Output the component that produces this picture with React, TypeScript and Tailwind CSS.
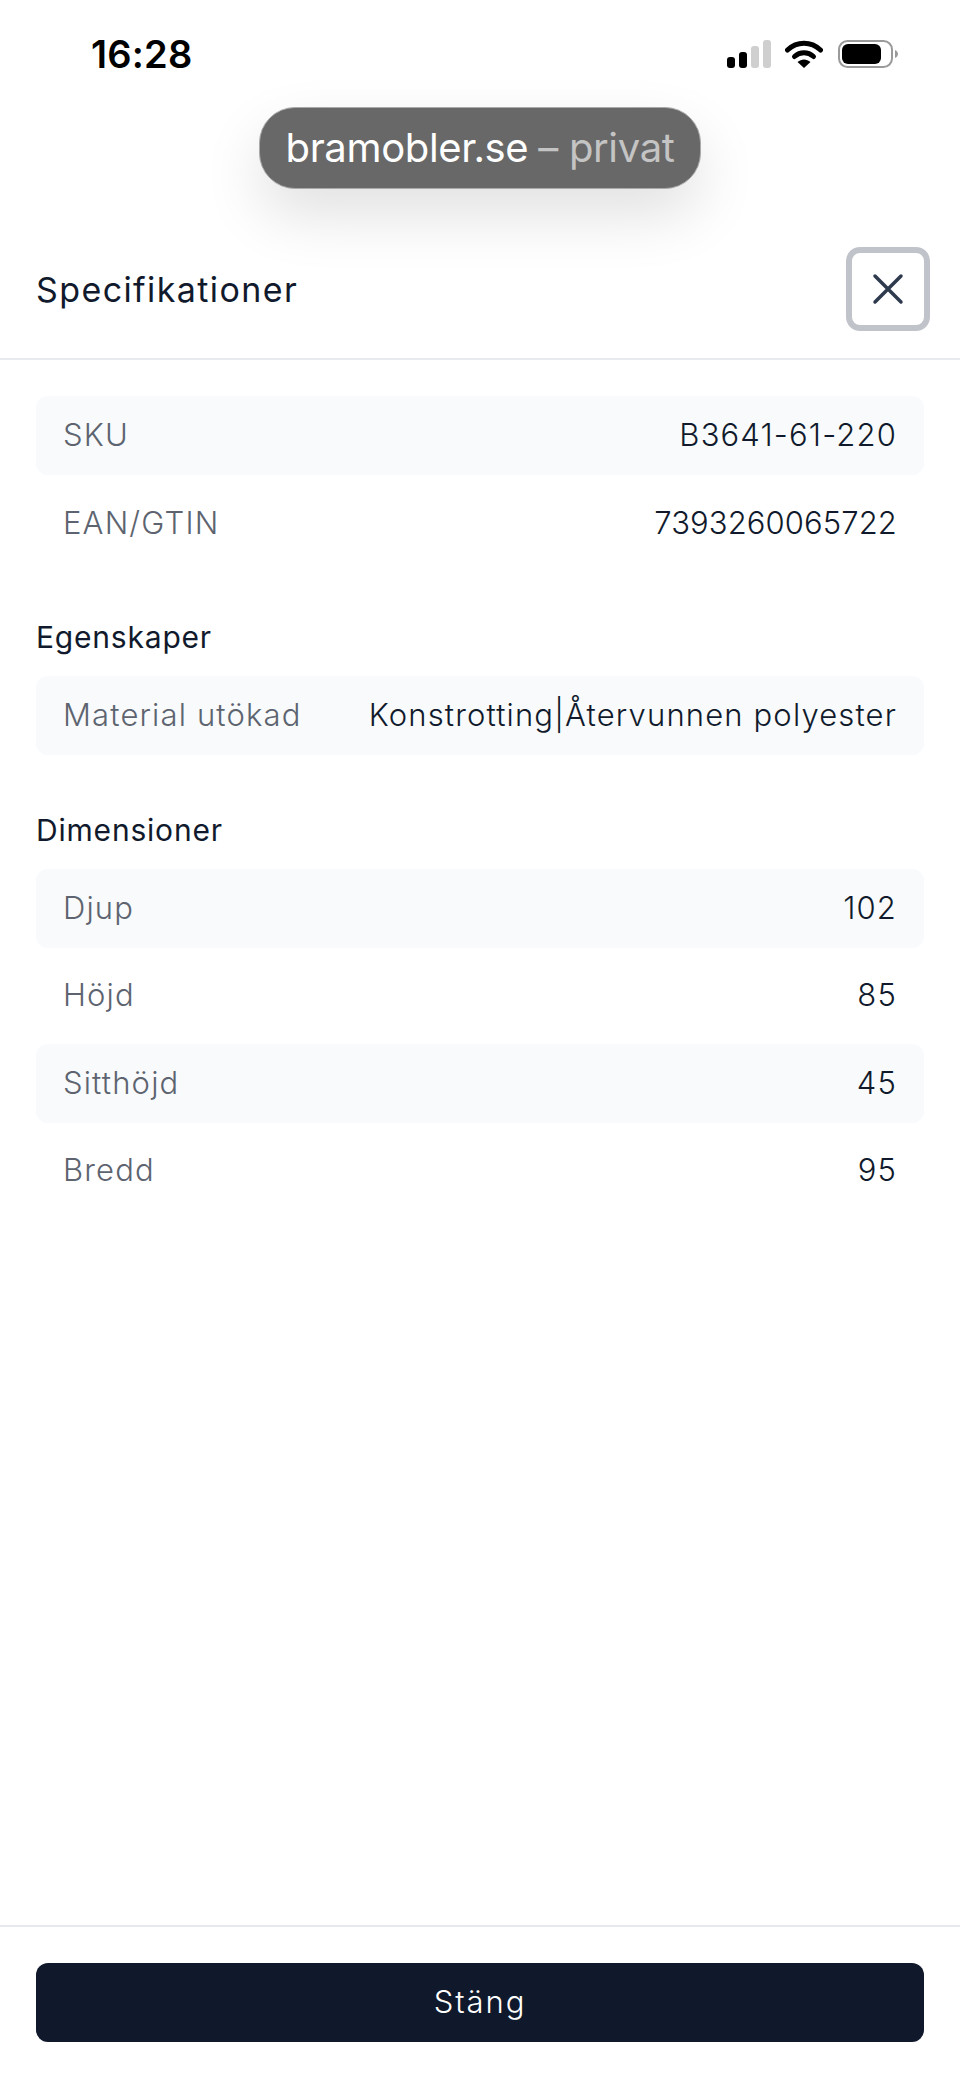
const MAIN_ROWS = [
  { label: "SKU", value: "B3641-61-220" },
  { label: "EAN/GTIN", value: "7393260065722", tight: true },
];
const PROPERTY_ROWS = [{ label: "Material utökad", value: "Konstrotting|Återvunnen polyester" }];
const DIMENSION_ROWS = [
  { label: "Djup", value: "102" },
  { label: "Höjd", value: "85" },
  { label: "Sitthöjd", value: "45" },
  { label: "Bredd", value: "95" },
];

function SpecRows({ rows }: { rows: { label: string; value: string; tight?: boolean }[] }) {
  return (
    <div className="flex flex-col gap-[8.5px]">
      {rows.map((row, i) => (
        <div
          key={row.label}
          className={`flex h-[79px] items-center justify-between rounded-[12px] px-[27px] text-[31px] font-light tracking-[1.15px] ${
            i % 2 === 0 ? "bg-[#f8fafb]" : "bg-white"
          }`}
        >
          <span className="text-[#5d6470]">{row.label}</span>
          <span className={`text-[#111a2c] ${row.tight ? "tracking-[0.1px]" : ""}`}>{row.value}</span>
        </div>
      ))}
    </div>
  );
}

function StatusIcons() {
  return (
    <div className="flex items-center">
      <svg width="44" height="28" viewBox="0 0 44 28">
        <rect x="0" y="17" width="8" height="11" rx="3" fill="#000" />
        <rect x="12" y="12" width="8" height="16" rx="3" fill="#000" />
        <rect x="24" y="6" width="8" height="22" rx="3" fill="#cfcfcf" />
        <rect x="36" y="0" width="8" height="28" rx="3" fill="#cfcfcf" />
      </svg>
      <svg className="ml-[14px]" width="38" height="28" viewBox="0 0 38 28">
        <path d="M2.5 10 C12 1 26 1 35.5 10" fill="none" stroke="#000" strokeWidth="5" strokeLinecap="round" />
        <path d="M9.5 16.5 C15 11.5 23 11.5 28.5 16.5" fill="none" stroke="#000" strokeWidth="5" strokeLinecap="round" />
        <path d="M12.5 22 C16.5 18.5 21.5 18.5 25.5 22 L19 28 Z" fill="#000" />
      </svg>
      <svg className="ml-[15px]" width="60" height="28" viewBox="0 0 60 28">
        <rect x="1" y="1" width="53" height="26" rx="8.5" fill="none" stroke="#9a9a9a" strokeWidth="2" />
        <rect x="4" y="4" width="39" height="20" rx="6" fill="#000" />
        <path d="M57 10 C59 11 60 12.5 60 14 C60 15.5 59 17 57 18 Z" fill="#9a9a9a" />
      </svg>
    </div>
  );
}

export default function App() {
  return (
    <div className="relative flex h-[2077px] w-[960px] flex-col overflow-hidden bg-white font-['Inter',sans-serif] text-[#111a2c]">
      <div className="flex h-[107px] shrink-0 items-center justify-between pl-[91px] pr-[62px] pt-[1px]">
        <span className="text-[38px] font-semibold tracking-[0.2px] text-black">16:28</span>
        <StatusIcons />
      </div>

      {/* site tooltip that iOS puts over the page */}
      <div className="absolute left-[259px] top-[107px] z-10 flex h-[82px] w-[442px] items-center justify-center rounded-[36px] border border-[#a9a9a9] bg-[#686868] text-[40px] tracking-[-0.35px] shadow-[0_26px_60px_rgba(0,0,0,0.12)]">
        <span className="text-white">bramobler.se</span>
        <span className="ml-[10px] text-[#c4c4c4]">– privat</span>
      </div>

      <div className="flex h-[253px] shrink-0 items-end justify-between border-b-2 border-[#e7ebef] pb-[27px] pl-[36px] pr-[30px]">
        <h1 className="mb-[21px] text-[34px] font-normal leading-[40px] tracking-[1.4px]">Specifikationer</h1>
        <button className="flex h-[84px] w-[84px] items-center justify-center rounded-[14px] border-[6px] border-[#c0c3ca] bg-white text-[#2e3a4e]">
          <svg width="34" height="34" viewBox="0 0 34 34" fill="none" stroke="currentColor" strokeWidth="3.5" strokeLinecap="round">
            <path d="M4 4 L30 30 M30 4 L4 30" />
          </svg>
        </button>
      </div>

      <div className="flex flex-1 flex-col px-[36px] pt-[36px]">
        <SpecRows rows={MAIN_ROWS} />
        <h2 className="mb-[19px] mt-[55px] h-[39px] text-[30px] font-normal leading-[39px] tracking-[0.8px]">Egenskaper</h2>
        <SpecRows rows={PROPERTY_ROWS} />
        <h2 className="mb-[19px] mt-[56px] h-[39px] text-[30px] font-normal leading-[39px] tracking-[0.8px]">Dimensioner</h2>
        <SpecRows rows={DIMENSION_ROWS} />
      </div>

      <div className="h-[152px] shrink-0 border-t-2 border-[#e7e9ee] px-[36px] pt-[36px]">
        <button className="flex h-[79px] w-full items-center justify-center rounded-[12px] bg-[#10192b] text-[31px] font-light tracking-[1.9px] text-white">
          Stäng
        </button>
      </div>
    </div>
  );
}
